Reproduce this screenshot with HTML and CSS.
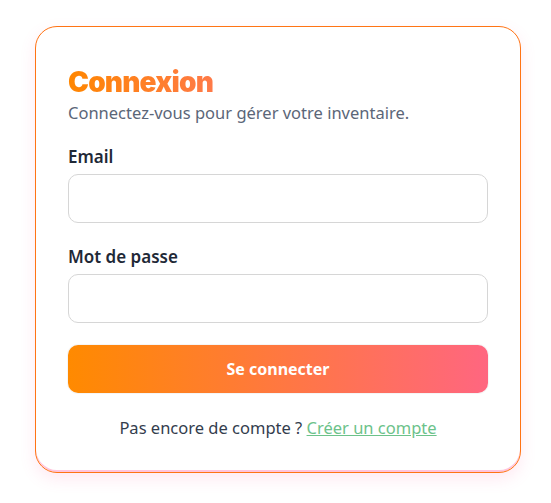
FILE: index.html
```html
<!DOCTYPE html>
<html lang="fr">
<head>
<meta charset="utf-8">
<link rel="stylesheet" href="styles.css">
</head>
<body>
<main class="page">
  <section class="card">
    <h1 class="title">Connexion</h1>
    <p class="subtitle">Connectez-vous pour gérer votre inventaire.</p>
    <form class="form">
      <label class="field">
        <span class="label">Email</span>
        <input class="input" type="email">
      </label>
      <label class="field">
        <span class="label">Mot de passe</span>
        <input class="input" type="password">
      </label>
      <button class="btn" type="button">Se connecter</button>
    </form>
    <p class="footer">Pas encore de compte ? <a class="link" href="#">Créer un compte</a></p>
  </section>
</main>
</body>
</html>
```
FILE: styles.css
```css
* { box-sizing: border-box; }
html, body { margin: 0; padding: 0; background: #ffffff; }
body { font-family: "Noto Sans", "Open Sans", sans-serif; }
.page {
  padding: 26px 30px 20px 35px;
  display: flex;
}
.card {
  width: 487px;
  border: 1px solid #ff7414;
  border-radius: 22px;
  padding: 37px 32px 32px 32px;
  background: #fff;
  box-shadow: inset 0 -2px 0 #ffc4dc, 0 6px 16px rgba(255, 102, 160, 0.14);
}
.title {
  margin: 0;
  font-family: "Inter", sans-serif;
  font-weight: 900;
  font-size: 28px;
  line-height: 36px;
  letter-spacing: -0.8px;
  background: linear-gradient(90deg, #ff8600, #ff7a48);
  -webkit-background-clip: text;
  background-clip: text;
  color: transparent;
  display: inline-block;
}
.subtitle {
  margin: 1px 0 0;
  font-size: 16.5px;
  line-height: 24px;
  color: #5b6678;
}
.form {
  margin-top: 20px;
  display: flex;
  flex-direction: column;
}
.field {
  display: flex;
  flex-direction: column;
  gap: 5px;
  margin-bottom: 22px;
}
.label {
  font-size: 17px;
  line-height: 24px;
  font-weight: 600;
  color: #1f2937;
}
.input {
  height: 49px;
  width: 100%;
  border: 1px solid #d6d6d6;
  border-radius: 10px;
  background: #fff;
  outline: none;
}
.btn {
  margin-top: 0;
  height: 48px;
  border: none;
  border-radius: 10px;
  background: linear-gradient(90deg, #ff8a00, #ff6680);
  color: #fff;
  font-family: "Noto Sans", sans-serif;
  font-weight: 700;
  font-size: 16px;
  box-shadow: 0 0 0 1px rgba(0,0,0,0.04);
}
.footer {
  margin: 23px 0 0;
  text-align: center;
  font-size: 16.5px;
  line-height: 24px;
  color: #333d4d;
}
.link {
  color: #6cc28a;
  text-decoration: underline;
}
```
